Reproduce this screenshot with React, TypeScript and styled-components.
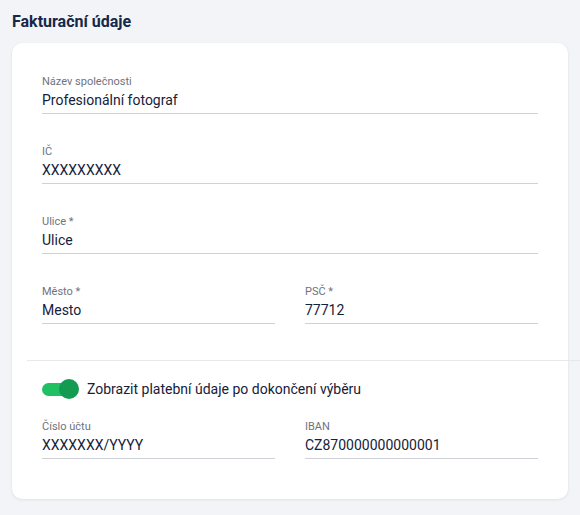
import React, { useState } from "react";
import styled, { createGlobalStyle } from "styled-components";

const Global = createGlobalStyle`
  html, body { margin: 0; padding: 0; background: #f3f4f7; }
  body { font-family: Roboto, "Noto Sans", Arial, sans-serif; -webkit-font-smoothing: antialiased; }
  * { box-sizing: border-box; }
`;

const Page = styled.div`
  width: 580px;
  height: 515px;
  padding: 11px 12px 0;
  overflow: hidden;
`;

const Title = styled.h2`
  margin: 0 0 11px;
  font-size: 16px;
  line-height: 21px;
  font-weight: 700;
  color: #15284a;
`;

const Card = styled.div`
  background: #fff;
  border-radius: 10px;
  box-shadow: 0 1px 3px rgba(20, 30, 60, 0.08), 0 0 1px rgba(20, 30, 60, 0.06);
  padding: 32px 30px 40px;
  display: flex;
  flex-direction: column;
`;

const Stack = styled.div`
  display: flex;
  flex-direction: column;
  gap: 31px;
`;

const Row = styled.div`
  display: grid;
  grid-template-columns: 1fr 1fr;
  column-gap: 30px;
`;

const Field = styled.label`
  display: flex;
  flex-direction: column;
  border-bottom: 1px solid #cfd2d8;
  padding-bottom: 3px;
`;

const Label = styled.span`
  font-size: 11px;
  line-height: 13px;
  color: #6e7380;
`;

const Value = styled.span`
  margin-top: 2px;
  font-size: 14px;
  line-height: 20px;
  color: #16213a;
`;

const Divider = styled.hr`
  border: 0;
  border-top: 1px solid #e6e8ec;
  margin: 36px -42px 18px -15px;
`;

const ToggleRow = styled.div`
  display: flex;
  align-items: center;
  gap: 8px;
  margin-bottom: 21px;
`;

const Track = styled.button<{ $on: boolean }>`
  position: relative;
  width: 37px;
  height: 20px;
  padding: 0;
  border: 0;
  background: transparent;
  cursor: pointer;
  flex: none;
  &::before {
    content: "";
    position: absolute;
    left: 0;
    top: 4px;
    width: 34px;
    height: 13px;
    border-radius: 7px;
    background: ${(p) => (p.$on ? "#1fc163" : "#c7cbd1")};
  }
  &::after {
    content: "";
    position: absolute;
    top: 0;
    left: ${(p) => (p.$on ? "17px" : "0")};
    width: 20px;
    height: 20px;
    border-radius: 50%;
    background: ${(p) => (p.$on ? "#139b52" : "#f2f3f5")};
  }
`;

const ToggleText = styled.span`
  font-size: 14px;
  line-height: 20px;
  color: #16213a;
`;

const F = ({ label, value }: { label: string; value: string }) => (
  <Field>
    <Label>{label}</Label>
    <Value>{value}</Value>
  </Field>
);

export default function App() {
  const [on, setOn] = useState(true);
  return (
    <Page>
      <Global />
      <Title>Fakturační údaje</Title>
      <Card>
        <Stack>
          <F label="Název společnosti" value="Profesionální fotograf" />
          <F label="IČ" value="XXXXXXXXX" />
          <F label="Ulice *" value="Ulice" />
          <Row>
            <F label="Město *" value="Mesto" />
            <F label="PSČ *" value="77712" />
          </Row>
        </Stack>
        <Divider />
        <ToggleRow>
          <Track $on={on} onClick={() => setOn(!on)} aria-label="toggle" />
          <ToggleText>Zobrazit platební údaje po dokončení výběru</ToggleText>
        </ToggleRow>
        <Row>
          <F label="Číslo účtu" value="XXXXXXX/YYYY" />
          <F label="IBAN" value="CZ870000000000001" />
        </Row>
      </Card>
    </Page>
  );
}
